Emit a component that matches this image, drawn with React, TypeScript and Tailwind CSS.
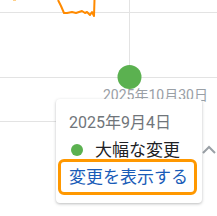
import React from 'react';

const font = { fontFamily: '"Roboto", "Noto Sans CJK JP", sans-serif' };

const App: React.FC = () => {
  return (
    <div className="relative w-[217px] h-[216px] overflow-hidden bg-white" style={font}>
      {/* chart canvas */}
      <svg className="absolute left-0 top-0" width="217" height="216" viewBox="0 0 217 216">
        <line x1="0" y1="12.5" x2="217" y2="12.5" stroke="#e3e3e3" strokeWidth="1" />
        <line x1="0" y1="77.5" x2="217" y2="77.5" stroke="#e3e3e3" strokeWidth="1" />
        <line x1="0" y1="121.5" x2="60" y2="121.5" stroke="#e3e3e3" strokeWidth="1" />
        <line x1="129.5" y1="0" x2="129.5" y2="77" stroke="#e3e3e3" strokeWidth="1" />
        <polyline
          points="58,0 61,6 64,13 67,13 72,12 76,13 79,12 82,11 85,13 87,12 90,15 92,12 94,16 94.5,0"
          fill="none"
          stroke="#ff8a00"
          strokeWidth="2"
          strokeLinejoin="round"
        />
        <line x1="13" y1="0" x2="16" y2="0" stroke="#ffd08a" strokeWidth="2" />
        <circle cx="129.5" cy="77" r="12" fill="#5bb150" />
        <path d="M203 153 L209 147 L215 153" fill="none" stroke="#9aa0a6" strokeWidth="2" />
      </svg>

      {/* axis label */}
      <div className="absolute left-[103px] top-[86px] text-[14px] leading-[18px] text-[#9aa0a6] whitespace-nowrap">
        2025年10月30日
      </div>

      {/* tooltip card */}
      <div className="absolute left-[56px] top-[99px] w-[146px] h-[104px] bg-white rounded-[4px] shadow-[0_1px_3px_rgba(60,64,67,0.35)] flex flex-col pl-[13px] pt-[14px]">
        <div className="text-[16px] leading-[20px] text-[#70757a] whitespace-nowrap">2025年9月4日</div>
        <div className="flex items-center gap-[12px] mt-[7px] pl-[2px] h-[20px]">
          <span className="w-[12px] h-[12px] rounded-full bg-[#5bb150]" />
          <span className="text-[17px] leading-[20px] text-[#202124] whitespace-nowrap">大幅な変更</span>
        </div>
        <div className="-ml-[11px] mt-[-1px] w-[139px] h-[36px] border-[3px] border-[#ff9800] rounded-[6px] flex items-center pl-[8px]">
          <span className="text-[17px] leading-[20px] text-[#1a5cb8] whitespace-nowrap">変更を表示する</span>
        </div>
      </div>
    </div>
  );
};

export default App;
